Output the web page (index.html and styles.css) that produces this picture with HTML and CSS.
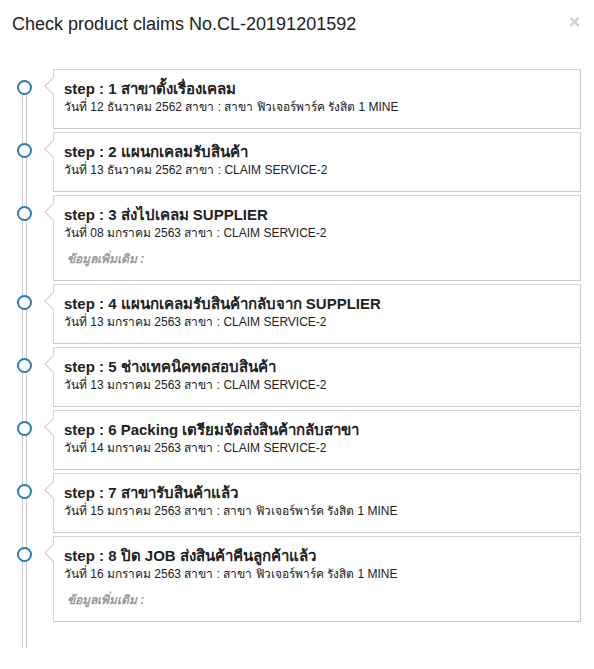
FILE: index.html
```html
<!DOCTYPE html>
<html lang="th">
<head>
    <meta charset="UTF-8">
    <meta name="viewport" content="width=device-width, initial-scale=1.0">
    <title>Check product claims</title>
    <link rel="stylesheet" href="styles.css">
</head>
<body>
    <div class="modal">
        <div class="modal-header">
            <h4 class="modal-title">Check product claims No.CL-20191201592</h4>
            <button class="close" type="button">&times;</button>
        </div>
        <ul class="steps">
            <li class="step">
                <span class="dot"></span>
                <div class="card">
                    <div class="step-title">step : 1 สาขาตั้งเรื่องเคลม</div>
                    <div class="step-info">วันที่ 12 ธันวาคม 2562 สาขา : สาขา ฟิวเจอร์พาร์ค รังสิต 1 MINE</div>
                </div>
            </li>
            <li class="step">
                <span class="dot"></span>
                <div class="card">
                    <div class="step-title">step : 2 แผนกเคลมรับสินค้า</div>
                    <div class="step-info">วันที่ 13 ธันวาคม 2562 สาขา : CLAIM SERVICE-2</div>
                </div>
            </li>
            <li class="step">
                <span class="dot"></span>
                <div class="card">
                    <div class="step-title">step : 3 ส่งไปเคลม SUPPLIER</div>
                    <div class="step-info">วันที่ 08 มกราคม 2563 สาขา : CLAIM SERVICE-2</div>
                    <div class="step-note">ข้อมูลเพิ่มเติม :</div>
                </div>
            </li>
            <li class="step">
                <span class="dot"></span>
                <div class="card">
                    <div class="step-title">step : 4 แผนกเคลมรับสินค้ากลับจาก SUPPLIER</div>
                    <div class="step-info">วันที่ 13 มกราคม 2563 สาขา : CLAIM SERVICE-2</div>
                </div>
            </li>
            <li class="step">
                <span class="dot"></span>
                <div class="card">
                    <div class="step-title">step : 5 ช่างเทคนิคทดสอบสินค้า</div>
                    <div class="step-info">วันที่ 13 มกราคม 2563 สาขา : CLAIM SERVICE-2</div>
                </div>
            </li>
            <li class="step">
                <span class="dot"></span>
                <div class="card">
                    <div class="step-title">step : 6 Packing เตรียมจัดส่งสินค้ากลับสาขา</div>
                    <div class="step-info">วันที่ 14 มกราคม 2563 สาขา : CLAIM SERVICE-2</div>
                </div>
            </li>
            <li class="step">
                <span class="dot"></span>
                <div class="card">
                    <div class="step-title">step : 7 สาขารับสินค้าแล้ว</div>
                    <div class="step-info">วันที่ 15 มกราคม 2563 สาขา : สาขา ฟิวเจอร์พาร์ค รังสิต 1 MINE</div>
                </div>
            </li>
            <li class="step">
                <span class="dot"></span>
                <div class="card">
                    <div class="step-title">step : 8 ปิด JOB ส่งสินค้าคืนลูกค้าแล้ว</div>
                    <div class="step-info">วันที่ 16 มกราคม 2563 สาขา : สาขา ฟิวเจอร์พาร์ค รังสิต 1 MINE</div>
                    <div class="step-note">ข้อมูลเพิ่มเติม :</div>
                </div>
            </li>
        </ul>
    </div>
</body>
</html>
```

FILE: styles.css
```css
body {
    font-family: "Liberation Sans", Arial, Tahoma, sans-serif;
    background-color: #fff;
    color: #222;
    margin: 0;
    padding: 0;
}
.modal {
    width: 594px;
}
.modal-header {
    display: flex;
    justify-content: space-between;
    align-items: center;
    padding: 12px 14px 12px 12px;
    height: 24px;
}
.modal-title {
    margin: 0;
    font-size: 18px;
    font-weight: normal;
    color: #222;
    line-height: 24px;
}
.close {
    border: none;
    background: none;
    padding: 0;
    margin-top: -5px;
    font-family: "Liberation Sans", Arial, sans-serif;
    font-size: 19px;
    font-weight: bold;
    line-height: 1;
    color: #ccc;
    cursor: pointer;
}
.steps {
    list-style-type: none;
    margin: 21px 0 0 0;
    padding: 0 0 23px 0;
    position: relative;
}
.steps::before {
    content: "";
    position: absolute;
    left: 22px;
    top: 18px;
    bottom: 0;
    width: 3px;
    border-left: 1px solid #ccc;
    border-right: 1px solid #ccc;
}
.step {
    display: flex;
    align-items: flex-start;
    margin-bottom: 3px;
}
.dot {
    position: relative;
    z-index: 1;
    box-sizing: border-box;
    width: 15px;
    height: 15px;
    margin: 11px 0 0 17px;
    border: 2px solid #2a7db5;
    border-radius: 50%;
    background-color: #fff;
    flex-shrink: 0;
}
.card {
    position: relative;
    margin-left: 21px;
    width: 528px;
    box-sizing: border-box;
    padding: 9px 10px 12px 10px;
    border: 1px solid #d6d6d6;
    border-right-color: #c8c8c8;
    border-bottom-color: #c8c8c8;
    background-color: #fff;
}
.card::before,
.card::after {
    content: "";
    position: absolute;
    top: 7px;
    border-style: solid;
    border-color: transparent;
}
.card::before {
    left: -10px;
    border-width: 9px 9px 9px 0;
    border-right-color: #d6d6d6;
}
.card::after {
    left: -8px;
    top: 8px;
    border-width: 8px 8px 8px 0;
    border-right-color: #fff;
}
.step-title {
    font-size: 15px;
    font-weight: bold;
    line-height: 20px;
    color: #222;
}
.step-info {
    font-size: 12px;
    line-height: 17px;
    color: #222;
}
.step-note {
    margin-top: 9px;
    padding-left: 3px;
    font-size: 12px;
    line-height: 17px;
    font-style: italic;
    font-weight: bold;
    color: #999;
}
```
